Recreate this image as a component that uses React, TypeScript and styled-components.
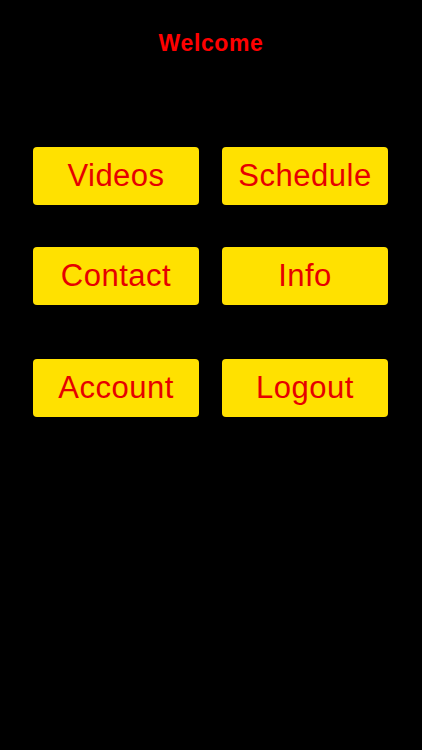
import React from "react";
import styled, { createGlobalStyle } from "styled-components";

const GlobalStyle = createGlobalStyle`
    html, body {
        margin: 0;
        padding: 0;
        background: #000000;
    }
    body {
        font-family: "Liberation Sans", Arial, sans-serif;
    }
`;

interface RowProps {
    $top: number;
}

const rows: { top: number; items: string[] }[] = [
    { top: 0, items: ["Videos", "Schedule"] },
    { top: 42, items: ["Contact", "Info"] },
    { top: 54, items: ["Account", "Logout"] },
];

const App: React.FC = () => {
    return (
        <Screen>
            <GlobalStyle />
            <Title>Welcome</Title>
            <Menu>
                {rows.map((row) => (
                    <Row key={row.items[0]} $top={row.top}>
                        {row.items.map((label) => (
                            <MenuButton key={label}>{label}</MenuButton>
                        ))}
                    </Row>
                ))}
            </Menu>
        </Screen>
    );
};

const Screen = styled.div`
    display: flex;
    flex-direction: column;
    width: 422px;
    height: 750px;
    background: #000000;
    overflow: hidden;
`;

const Title = styled.h1`
    margin: 0;
    padding-top: 30px;
    font-size: 23px;
    font-weight: bold;
    letter-spacing: 0.6px;
    line-height: 26px;
    text-align: center;
    color: #ff0000;
`;

const Menu = styled.div`
    display: flex;
    flex-direction: column;
    padding: 91px 34px 0 33px;
`;

const Row = styled.div<RowProps>`
    display: grid;
    grid-template-columns: 166px 166px;
    column-gap: 23px;
    margin-top: ${(props) => props.$top}px;
`;

const MenuButton = styled.button`
    height: 58px;
    padding: 0;
    border: none;
    border-radius: 4px;
    background: #ffe100;
    color: #e60000;
    font-family: "Liberation Sans", Arial, sans-serif;
    font-size: 31px;
    letter-spacing: 0.5px;
    cursor: pointer;
`;

export default App;
